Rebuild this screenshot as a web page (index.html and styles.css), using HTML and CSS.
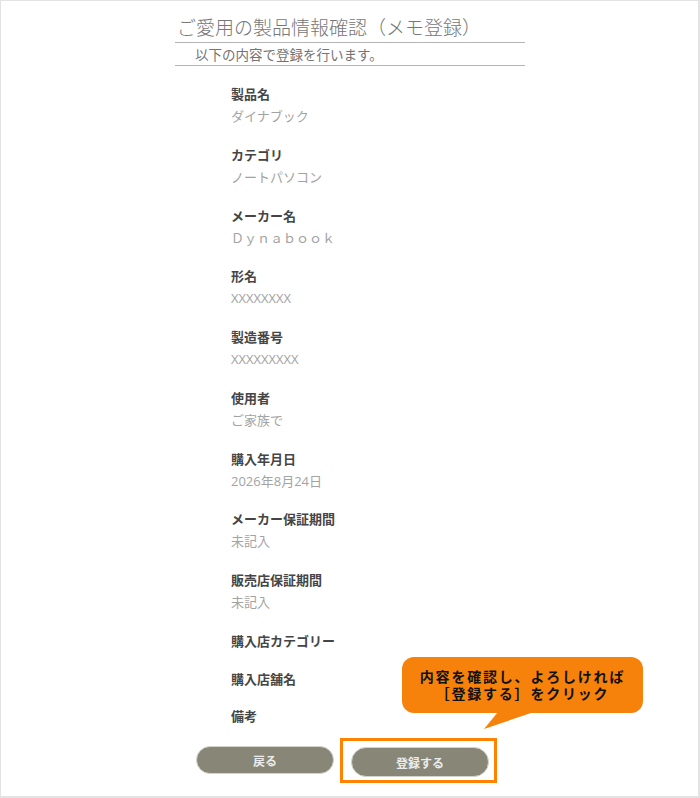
FILE: index.html
```html
<!DOCTYPE html>
<html lang="ja">
<head>
<meta charset="utf-8">
<title>ご愛用の製品情報確認（メモ登録）</title>
<link rel="stylesheet" href="styles.css">
</head>
<body>
<div class="page">
  <div class="container">
    <h1 class="title">ご愛用の製品情報確認（メモ登録）</h1>
    <p class="lead">以下の内容で登録を行います。</p>
    <dl class="fields">
      <div class="field"><dt>製品名</dt><dd>ダイナブック</dd></div>
      <div class="field"><dt>カテゴリ</dt><dd>ノートパソコン</dd></div>
      <div class="field"><dt>メーカー名</dt><dd>Ｄｙｎａｂｏｏｋ</dd></div>
      <div class="field"><dt>形名</dt><dd>XXXXXXXX</dd></div>
      <div class="field"><dt>製造番号</dt><dd>XXXXXXXXX</dd></div>
      <div class="field"><dt>使用者</dt><dd>ご家族で</dd></div>
      <div class="field"><dt>購入年月日</dt><dd>2026年8月24日</dd></div>
      <div class="field"><dt>メーカー保証期間</dt><dd>未記入</dd></div>
      <div class="field"><dt>販売店保証期間</dt><dd>未記入</dd></div>
      <div class="field"><dt>購入店カテゴリー</dt></div>
      <div class="field"><dt>購入店舗名</dt></div>
      <div class="field"><dt>備考</dt></div>
    </dl>
    <div class="actions">
      <button class="btn btn-back" type="button">戻る</button>
      <span class="highlight">
        <button class="btn btn-submit" type="button">登録する</button>
      </span>
    </div>
  </div>
  <div class="callout">
    <div class="callout-text">
      <span class="callout-line">内容を確認し、よろしければ</span>
      <span class="callout-line">［登録する］をクリック</span>
    </div>
    <svg class="callout-tail" width="60" height="20" viewBox="0 0 60 20" aria-hidden="true">
      <polygon points="14,0 50,0 0,17" fill="#f6820b"/>
    </svg>
  </div>
</div>
</body>
</html>
```

FILE: styles.css
```css
html, body {
  margin: 0;
  padding: 0;
  background: #ffffff;
}

body {
  font-family: "Noto Sans CJK JP", "Noto Sans", sans-serif;
}

.page {
  position: relative;
  width: 700px;
  height: 798px;
  box-sizing: border-box;
  border-style: solid;
  border-color: #e3e3e3;
  border-width: 1px 2px 2px 1px;
  overflow: hidden;
}

.container {
  width: 350px;
  margin: 0 auto;
  padding-left: 1px;
}

.title {
  margin: 0;
  padding: 13px 0 2px 2px;
  font-size: 19px;
  line-height: 26px;
  font-weight: 300;
  color: #767676;
  border-bottom: 1px solid #b4b4b4;
}

.lead {
  margin: 0;
  padding-left: 20px;
  font-size: 13.5px;
  line-height: 22px;
  color: #747474;
  border-bottom: 1px solid #b4b4b4;
}

.fields {
  margin: 16px 0 0 0;
  padding-left: 56px;
}

.field {
  margin-bottom: 14.75px;
}

.field dt {
  font-size: 13px;
  line-height: 23px;
  font-weight: 700;
  color: #454545;
}

.field dd {
  margin: 0;
  font-family: "Open Sans", "Noto Sans CJK JP", sans-serif;
  font-size: 13px;
  line-height: 23px;
  color: #a3a3a3;
}

.actions {
  display: flex;
  justify-content: center;
  align-items: flex-start;
  gap: 17px;
  margin-top: 19px;
  padding-right: 15px;
}

.btn {
  width: 138px;
  height: 28px;
  border: 1px solid #d4d4cc;
  border-radius: 14px;
  background: #878677;
  color: #ececec;
  font-family: "Noto Sans CJK JP", sans-serif;
  font-size: 12px;
  font-weight: 700;
  padding: 0;
  cursor: pointer;
}

.highlight {
  position: relative;
  display: block;
  margin-top: 1px;
}

.highlight .btn {
  display: block;
  height: 30px;
  border-radius: 15px;
}

.highlight::after {
  content: "";
  position: absolute;
  left: -11px;
  right: -8px;
  top: -9px;
  bottom: -6px;
  border: 3px solid #ff8200;
  pointer-events: none;
}

.callout {
  position: absolute;
  left: 401px;
  top: 656px;
  width: 241px;
  height: 56px;
  background: #f6820b;
  border-radius: 12px;
  display: flex;
  align-items: center;
  justify-content: center;
}

.callout-text {
  display: flex;
  flex-direction: column;
  align-items: center;
}

.callout-line {
  display: block;
  font-size: 14px;
  line-height: 17px;
  font-weight: 700;
  letter-spacing: 1.8px;
  color: #111111;
  white-space: nowrap;
}

.callout-tail {
  position: absolute;
  left: 82px;
  top: 55px;
}
```
